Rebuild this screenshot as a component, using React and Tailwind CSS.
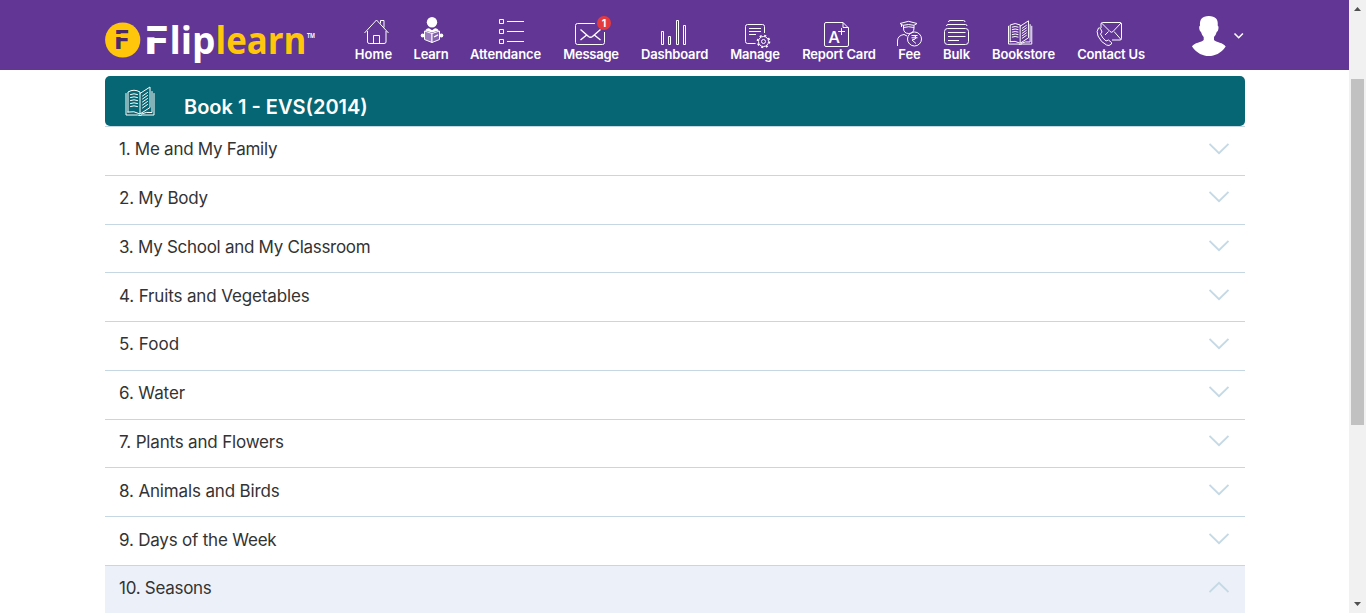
import React from "react";

function BookGlyph({ weight = 1 }) {
  return (
    <g fill="none" stroke="#fff" strokeWidth={weight} strokeLinejoin="round" strokeLinecap="round">
      <path d="M3 26V6Q9 2.5 15 6V28Q9 24.5 3 26Z" />
      <path d="M15 7.5L25 1V21.5L15 28" />
      <path d="M1 7.5V29H12.5Q15 30 17.5 29H29V7.5" />
      <path d="M27 5.5V26.5Q21 25.5 16.5 28" />
      <path d="M5.5 8.5Q9 7 12.5 8.5M5.5 11.5Q9 10 12.5 11.5M5.5 14.5Q9 13 12.5 14.5M5.5 17.5Q9 16 12.5 17.5M5.5 20.5Q9 19 12.5 20.5M17.5 10L22.5 6.5M17.5 13L22.5 9.5M17.5 16L22.5 12.5M17.5 19L22.5 15.5M17.5 22L22.5 18.5" />
    </g>
  );
}

const icons = {
  Home: (
    <>
      <path d="M364.5 33L376.5 20L388.5 33" />
      <path d="M367.5 31V42Q367.5 43.5 369.5 43.5H384Q386 43.5 386 42V31" />
      <path d="M373.5 43.5V35.5H379.5V43.5M380.5 23.5V20.5H384V27.5" />
    </>
  ),
  Learn: (
    <>
      <circle cx="432" cy="22.2" r="5.2" fill="#fff" stroke="none" />
      <path d="M425 30.5Q427 28 429 28.2L432 30.2L435 28.2Q437 28 439 30.5L432 32.5Z" fill="#fff" stroke="none" />
      <path d="M424.5 31L432 33.5V42.5L424.5 39.5Z" fill="#9b7dc0" />
      <path d="M439.5 31L432 33.5V42.5L439.5 39.5Z" fill="#8460b0" />
      <path d="M434 37L438 34.8" strokeWidth="1.4" />
      <circle cx="422.7" cy="35.5" r="2" fill="#fff" stroke="none" />
      <circle cx="441.3" cy="35.5" r="2" fill="#fff" stroke="none" />
    </>
  ),
  Attendance: (
    <>
      <path d="M499.5 19.5h4v4h-4zM499.5 29.5h4v4h-4zM499.5 39.5h4v4h-4z" />
      <path d="M507 21.5h17M507 31.5h17M507 41.5h17" />
    </>
  ),
  Message: (
    <>
      <path d="M595 23.5H577.5Q575.5 23.5 575.5 25.5V42.5Q575.5 44.5 577.5 44.5H602.5Q604.5 44.5 604.5 42.5V32" />
      <path d="M580.5 29.5L588.5 36.5Q590.5 38 592.5 36.5L600.5 29.5M580.5 40L587 34.8M600.5 40L594 34.8" strokeWidth="1.4" />
      <circle cx="604" cy="23" r="7" fill="#e53a3d" stroke="none" />
      <text x="604" y="27" textAnchor="middle" fontSize="10.5" fontWeight="700" fill="#fff" stroke="none">1</text>
    </>
  ),
  Dashboard: (
    <path d="M661.5 31.5h2v13h-2zM668.5 36.5h2v8h-2zM676.5 20.5h2v24h-2zM683.5 25.5h2v19h-2z" />
  ),
  Manage: (
    <>
      <path d="M755.5 43.5H747.5Q745.5 43.5 745.5 41.5V26.5Q745.5 24.5 747.5 24.5H762.5Q764.5 24.5 764.5 26.5V33" />
      <path d="M749 28.5H761M749 31.5H761M749 34.5H756" />
      <circle cx="763.5" cy="41.5" r="5" />
      <circle cx="763.5" cy="41.5" r="2" />
      <circle cx="763.5" cy="41.5" r="6" strokeWidth="1.6" strokeDasharray="2.1 2.612" />
    </>
  ),
  "Report Card": (
    <>
      <path d="M843 22.5H826Q824.5 22.5 824.5 24V45Q824.5 46.5 826 46.5H847Q848.5 46.5 848.5 45V28L843 22.5V27.5H848.5" />
      <text x="834" y="43.2" textAnchor="middle" fontSize="16.5" fontWeight="500" fill="#fff" stroke="none">A</text>
      <path d="M838.2 31.5H845M841.5 28V35" />
    </>
  ),
  Fee: (
    <>
      <path d="M900 23.5L908.5 21.3L917 23.5L914 25.3Q908.5 23.7 903 25.3Z" />
      <path d="M903.5 25.5V28Q903.5 33.5 908.8 33.5Q914 33.5 914 28V25.5M903.5 27.5Q908.8 26 914 27.5M901.5 24V27" />
      <path d="M897.5 46V41Q897.5 35.5 904 34.5L907 36" />
      <circle cx="914.5" cy="39" r="7" />
      <path d="M911.5 35.5H917.5M911.5 37.8H917.5M913 35.5Q916 35.5 916 37.5T912 40L916 43.5" />
    </>
  ),
  Bulk: (
    <>
      <rect x="944.5" y="28.5" width="24" height="16" rx="3" />
      <path d="M948 32.5H965.5M948 36.5H965.5M948 40.5H959" />
      <path d="M946.5 26Q946.5 24.5 948 24.5H965.5Q967 24.5 967 26M948.5 22Q948.5 20.5 950 20.5H963.5Q965 20.5 965 22" />
    </>
  ),
  Bookstore: (
    <g transform="translate(1007.7 20) scale(.83)">
      <BookGlyph weight={1.2} />
    </g>
  ),
  "Contact Us": (
    <>
      <path d="M1101 28V24Q1101 22.5 1102.5 22.5H1120Q1121.5 22.5 1121.5 24V38.5Q1121.5 40 1120 40H1112" />
      <path d="M1101.5 23L1110 31.5Q1111.5 33 1113 31.5L1121 23M1114 31.5L1121 39.5M1108.5 31.5L1105 35" />
      <path d="M1098.5 28Q1096 31 1098 36Q1101 42.5 1106.5 45Q1109 46.5 1111.5 44V42.5L1108.5 40L1106 41Q1102.5 38.5 1100.5 34L1102 32L1100.5 28.5Q1099.5 27.5 1098.5 28Z" />
    </>
  ),
};

const nav = [
  { label: "Home", x: 355, box: "w-[37px]", w: 37, track: "tracking-[0.1px]" },
  { label: "Learn", x: 414, box: "w-[34px]", w: 34, track: "tracking-[-0.2px]" },
  { label: "Attendance", x: 470, box: "w-[71px]", w: 71, track: "tracking-[-0.1px]" },
  { label: "Message", x: 563, box: "w-[56px]", w: 56, track: "tracking-[-0.25px]" },
  { label: "Dashboard", x: 641, box: "w-[67px]", w: 67, track: "tracking-[-0.15px]" },
  { label: "Manage", x: 730, box: "w-[50px]", w: 50, track: "tracking-[-0.2px]" },
  { label: "Report Card", x: 802, box: "w-[74px]", w: 74, track: "tracking-[-0.15px]" },
  { label: "Fee", x: 898, box: "w-[23px]", w: 23, track: "tracking-[0px]" },
  { label: "Bulk", x: 943, box: "w-[27px]", w: 27, track: "tracking-[-0.1px]" },
  { label: "Bookstore", x: 992, box: "w-[63px]", w: 63, track: "tracking-[-0.1px]" },
  { label: "Contact Us", x: 1077, box: "w-[68px]", w: 68, track: "tracking-[-0.2px]" },
];

const chapters = [
  { title: "Me and My Family", track: "tracking-[-0.26px]" },
  { title: "My Body", track: "tracking-[-0.24px]" },
  { title: "My School and My Classroom", track: "tracking-[-0.28px]" },
  { title: "Fruits and Vegetables", track: "tracking-[-0.14px]" },
  { title: "Food", track: "tracking-[0.06px]" },
  { title: "Water", track: "tracking-[-0.1px]" },
  { title: "Plants and Flowers", track: "tracking-[-0.18px]" },
  { title: "Animals and Birds", track: "tracking-[-0.15px]" },
  { title: "Days of the Week", track: "tracking-[-0.2px]" },
  { title: "Seasons", track: "tracking-[-0.28px]" },
];

function Logo() {
  return (
    <svg width="212" height="50" viewBox="105 18 212 50" className="mt-[18px] block shrink-0 overflow-visible font-['Open_Sans',sans-serif]">
      <circle cx="122.7" cy="40" r="17.6" fill="#ffc60b" />
      <text x="113.6" y="49" fontSize="26" fontWeight="700" fill="#4b2a6b" textLength="16" lengthAdjust="spacingAndGlyphs">F</text>
      <rect x="115" y="34" width="9" height="3" fill="#ffc60b" />
      <text x="143" y="54" fontSize="39" fontWeight="700" fill="#fff" textLength="26" lengthAdjust="spacingAndGlyphs">F</text>
      <rect x="146" y="31" width="10.5" height="6.3" fill="#613694" />
      <text x="169.5" y="54" fontSize="37.5" fontWeight="700" fill="#fff" textLength="46" lengthAdjust="spacingAndGlyphs">lip</text>
      <text x="215.5" y="54" fontSize="37.5" fontWeight="700" fill="#ffc60b" textLength="91" lengthAdjust="spacingAndGlyphs">learn</text>
      <text x="307" y="37.5" fontSize="6.5" fontWeight="700" fill="#fff" textLength="8" lengthAdjust="spacingAndGlyphs">TM</text>
    </svg>
  );
}

function Header() {
  return (
    <header className="flex h-[70px] shrink-0 bg-[#613694] pl-[105px]">
      <Logo />
      <nav className="ml-[38px] flex gap-[22px]">
        {nav.map((n) => (
          <a key={n.label} className={`flex flex-col pt-3.5 text-white ${n.box}`}>
            <svg
              width={n.w}
              height="32"
              viewBox={`${n.x} 14 ${n.w} 32`}
              fill="none"
              stroke="#fff"
              strokeLinejoin="round"
              className="block shrink-0 overflow-visible"
            >
              {icons[n.label]}
            </svg>
            <span className={`flex justify-center whitespace-nowrap text-[13px] font-semibold leading-[17px] ${n.track}`}>{n.label}</span>
          </a>
        ))}
      </nav>
      <svg width="56" height="44" viewBox="1190 14 56 44" className="ml-[45px] mt-3.5 block shrink-0">
        <path
          d="M1208.8 16C1202 16 1199.5 19.5 1200 25.5Q1198.7 26 1199.3 29Q1199.8 31.5 1201 32Q1202 35.5 1203.7 37V40C1202 42.5 1194 42.5 1192 46.5C1197 53.5 1203 56 1208.8 56S1221 53.5 1225.7 46.5C1223.5 42.5 1215.8 42.5 1214 40V37Q1215.8 35.5 1216.7 32Q1218 31.5 1218.4 29Q1219 26 1217.7 25.5C1218.5 19.5 1215.5 16 1208.8 16Z"
          fill="#fff"
        />
        <path d="M1234.5 33.5L1238.7 37.7L1242.9 33.5" fill="none" stroke="#fff" strokeWidth="1.6" />
      </svg>
    </header>
  );
}

function Chapter({ index, title, track, open }) {
  return (
    <div
      className={`flex h-[48.77px] shrink-0 justify-between border-t border-[#c5d7e2] pl-3.5 pr-4 text-[17px] text-[#333] ${open ? "bg-[#ebf0f9]" : ""}`}
    >
      <span className={`pt-[10.4px] leading-6 ${track}`}>
        {index}. {title}
      </span>
      <svg width="20" height="12" viewBox="0 0 20 12" className={`mt-[15.6px] block ${open ? "rotate-180" : ""}`}>
        <path d="M.5 1L10 10.2L19.5 1" fill="none" stroke="#c5d9e5" strokeWidth="1.9" />
      </svg>
    </div>
  );
}

export default function App() {
  return (
    <div className="flex h-[613px] w-full overflow-hidden bg-white font-['Inter',sans-serif]">
      <div className="flex w-[1349px] shrink-0 flex-col">
        <Header />
        <main className="ml-[105px] mt-1.5 flex w-[1140px] flex-col">
          <div className="flex h-[50px] shrink-0 rounded-[5px] bg-[#066673] pl-5">
            <svg width="31" height="32" viewBox="0 0 31 32" className="mt-2.5 block">
              <BookGlyph />
            </svg>
            <h1 className="ml-7 pt-[17px] text-xl font-semibold leading-7 text-white">Book 1 - EVS(2014)</h1>
          </div>
          {chapters.map((c, i) => (
            <Chapter key={c.title} index={i + 1} title={c.title} track={c.track} open={i === 9} />
          ))}
        </main>
      </div>
      <div className="flex w-[17px] flex-col items-center bg-[#f1f1f1]">
        <svg width="7" height="4" viewBox="0 0 7 4" className="mt-[7px] block">
          <path d="M0 4L3.5 0L7 4Z" fill="#505050" />
        </svg>
        <div className="mt-[68px] h-[346px] w-[13px] bg-[#c1c1c1]" />
        <svg width="7" height="4" viewBox="0 0 7 4" className="mb-[7px] mt-auto block">
          <path d="M0 0L3.5 4L7 0Z" fill="#505050" />
        </svg>
      </div>
    </div>
  );
}
